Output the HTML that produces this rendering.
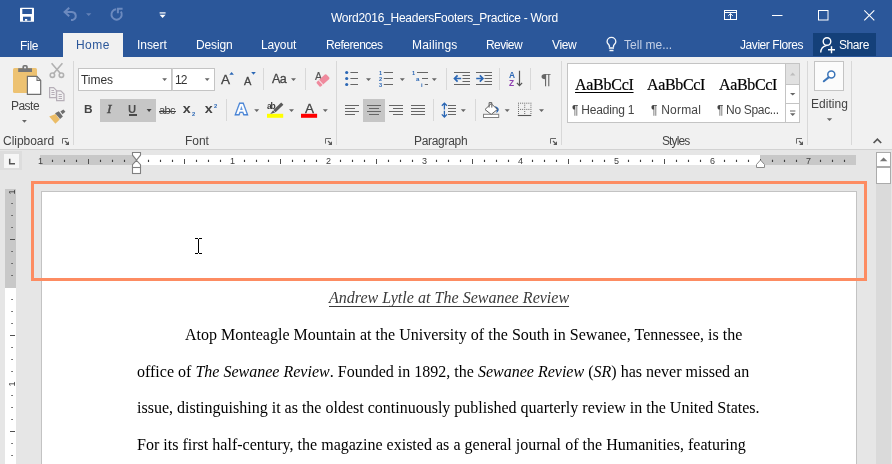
<!DOCTYPE html>
<html>
<head>
<meta charset="utf-8">
<title>Word2016_HeadersFooters_Practice - Word</title>
<style>
html,body{margin:0;padding:0;}
body{width:892px;height:464px;overflow:hidden;position:relative;background:#e6e6e6;font-family:"Liberation Sans",sans-serif;font-size:12px;color:#444;}
.abs{position:absolute;}
#titlebar{position:absolute;left:0;top:0;width:892px;height:57px;background:#2b579a;}
.t{position:absolute;white-space:nowrap;line-height:14px;font-size:12px;will-change:transform;}
.w{color:#fff;}
#hometab{position:absolute;left:63px;top:33px;width:60px;height:24px;background:#f1f1f1;}
#ribbon{position:absolute;left:0;top:57px;width:892px;height:92px;background:#f1f1f1;border-bottom:1px solid #d2d2d2;}
.vsep{position:absolute;width:1px;background:#d8d8d8;}
.box{position:absolute;background:#fff;border:1px solid #c4c4c4;box-sizing:border-box;}
.sel{position:absolute;background:#c6c6c6;}
svg{position:absolute;left:0;top:0;overflow:visible;}
#page{position:absolute;left:41px;top:191px;width:816px;height:280px;background:#fff;border:1px solid #c3c3c3;box-sizing:border-box;}
#orange{position:absolute;left:31px;top:181px;width:836px;height:100px;border:3px solid #fd8c62;box-sizing:border-box;}
.doc{will-change:transform;position:absolute;font-family:"Liberation Serif",serif;font-size:16px;line-height:18px;color:#000;white-space:nowrap;}
</style>
</head>
<body>
<div id="titlebar"></div>
<div id="hometab"></div>
<div class="abs" style="left:813px;top:33px;width:63px;height:23px;background:#144079"></div>
<div class="t" style="left:331.3px;top:11.24px;color:#fff;letter-spacing:-0.26px;">Word2016_HeadersFooters_Practice - Word</div>
<div class="t" style="left:20.0px;top:39.44px;color:#fff;letter-spacing:-0.3px;">File</div>
<div class="t" style="left:75.8px;top:38.44px;color:#2b579a;letter-spacing:0.43px;">Home</div>
<div class="t" style="left:137.1px;top:38.44px;color:#fff;letter-spacing:-0.06px;">Insert</div>
<div class="t" style="left:195.9px;top:38.44px;color:#fff;letter-spacing:-0.14px;">Design</div>
<div class="t" style="left:261.1px;top:38.44px;color:#fff;letter-spacing:-0.16px;">Layout</div>
<div class="t" style="left:326.0px;top:38.44px;color:#fff;letter-spacing:-0.48px;">References</div>
<div class="t" style="left:411.8px;top:38.44px;color:#fff;letter-spacing:0.19px;">Mailings</div>
<div class="t" style="left:486.1px;top:38.44px;color:#fff;letter-spacing:-0.56px;">Review</div>
<div class="t" style="left:552.3px;top:38.44px;color:#fff;letter-spacing:-0.37px;">View</div>
<div class="t" style="left:623.8px;top:38.44px;color:#c4d0e6;letter-spacing:0.02px;">Tell me...</div>
<div class="t" style="left:739.9px;top:38.44px;color:#fff;letter-spacing:-0.43px;">Javier Flores</div>
<div class="t" style="left:838.7px;top:38.44px;color:#fff;letter-spacing:-0.43px;">Share</div>
<svg width="892" height="57" viewBox="0 0 892 57">
<!-- save -->
<rect x="20" y="7.7" width="14" height="14.1" rx="0.6" fill="#fff"/>
<rect x="22.3" y="9" width="9.6" height="5" fill="#2b579a"/>
<rect x="23" y="16.7" width="7.8" height="4.1" fill="#2b579a"/>
<rect x="25" y="19" width="2.2" height="1.8" fill="#fff"/>
<!-- undo -->
<g fill="none" stroke="#6c8abf" stroke-width="2" stroke-linecap="butt">
<path d="M64.5 12 H72 A4 4 0 0 1 72.6 19.9 L71 20"/>
<path d="M69.2 7.7 L64.6 12 L69.2 16.3"/>
</g>
<path d="M86 13.2 h5.4 l-2.7 2.8z" fill="#6280b6"/>
<!-- redo -->
<g fill="none" stroke="#6c8abf" stroke-width="2">
<path d="M120.86 11.52 A5.2 5.2 0 1 1 116.15 9.32"/>
<path d="M117.9 13.2 V8.7 H122.6"/>
</g>
<!-- customize -->
<rect x="159.6" y="12.3" width="6" height="1.2" fill="#fff"/>
<path d="M159.6 14.8 h6 l-3 3.2z" fill="#fff"/>
<!-- ribbon display options -->
<g fill="none" stroke="#fff" stroke-width="1">
<rect x="724.5" y="10.5" width="12" height="9"/>
<path d="M724.5 12.5 H736.5"/>
<path d="M730.5 19.5 V13.6 M728.2 15.9 L730.5 13.6 L732.8 15.9"/>
</g>
<!-- window controls -->
<path d="M772 15.5 H782.5" stroke="#fff" stroke-width="1"/>
<rect x="818.5" y="10.5" width="9.5" height="9.5" fill="none" stroke="#fff" stroke-width="1"/>
<path d="M864.3 10.3 L874.3 20.3 M874.3 10.3 L864.3 20.3" stroke="#fff" stroke-width="1.1"/>
<!-- lightbulb -->
<g fill="none" stroke="#f4f7fb" stroke-width="1.35">
<path d="M609.4 47.2 V46.2 C609.4 44.6 607.1 43.9 607.1 41.8 A4.35 4.35 0 0 1 615.8 41.8 C615.8 43.9 613.5 44.6 613.5 46.2 V47.2"/>
<path d="M608.9 47.9 H614 M609.4 50.4 H613.5" stroke-width="1.5"/>
</g>
<!-- share person -->
<g fill="none" stroke="#fff" stroke-width="1.4">
<circle cx="827" cy="41.5" r="3.8"/>
<path d="M820.7 52.5 C821 48 823.5 46 826.5 45.6"/>
<path d="M831.5 46.3 V53.3 M828 49.8 H835"/>
</g>
</svg>
<div id="ribbon"></div>
<div class="vsep" style="left:73px;top:61px;height:84px;background:#d8d8d8"></div>
<div class="vsep" style="left:336px;top:61px;height:84px;background:#d8d8d8"></div>
<div class="vsep" style="left:561px;top:61px;height:84px;background:#d8d8d8"></div>
<div class="vsep" style="left:807px;top:61px;height:84px;background:#d8d8d8"></div>
<div class="vsep" style="left:851px;top:61px;height:84px;background:#d8d8d8"></div>
<div class="vsep" style="left:263px;top:68px;height:22px;background:#d8d8d8"></div>
<div class="vsep" style="left:305px;top:68px;height:22px;background:#d8d8d8"></div>
<div class="vsep" style="left:446px;top:68px;height:22px;background:#d8d8d8"></div>
<div class="vsep" style="left:499px;top:68px;height:22px;background:#d8d8d8"></div>
<div class="vsep" style="left:530px;top:68px;height:22px;background:#d8d8d8"></div>
<div class="vsep" style="left:226px;top:99px;height:22px;background:#d8d8d8"></div>
<div class="vsep" style="left:433px;top:99px;height:22px;background:#d8d8d8"></div>
<div class="vsep" style="left:475px;top:99px;height:22px;background:#d8d8d8"></div>
<div class="sel" style="left:100px;top:99px;width:56px;height:23px"></div>
<div class="sel" style="left:363px;top:99px;width:22px;height:23px"></div>
<div class="box" style="left:78px;top:68px;width:94px;height:23px"></div>
<div class="box" style="left:172px;top:68px;width:43px;height:23px;border-left-color:#d0d0d0"></div>
<div class="box" style="left:567px;top:63px;width:233px;height:60px"></div>
<div class="abs" style="left:785px;top:64px;width:1px;height:58px;background:#c4c4c4"></div>
<div class="abs" style="left:786px;top:64px;width:13px;height:20px;background:#e1e1e1"></div>
<div class="abs" style="left:786px;top:84px;width:13px;height:1px;background:#c4c4c4"></div>
<div class="abs" style="left:786px;top:103px;width:13px;height:1px;background:#c4c4c4"></div>
<div class="box" style="left:814px;top:61px;width:30px;height:30px;background:#fbfbfb"></div>
<div class="t" style="left:10.7px;top:98.64px;color:#444;letter-spacing:-0.53px;">Paste</div>
<div class="t" style="left:2.6px;top:133.54px;color:#444;letter-spacing:-0.03px;">Clipboard</div>
<div class="t" style="left:184.6px;top:133.54px;color:#444;letter-spacing:-0.03px;">Font</div>
<div class="t" style="left:413.6px;top:133.54px;color:#444;letter-spacing:-0.31px;">Paragraph</div>
<div class="t" style="left:662.3px;top:133.54px;color:#444;letter-spacing:-0.9px;">Styles</div>
<div class="t" style="left:810.7px;top:97.14px;color:#444;letter-spacing:0.03px;">Editing</div>
<div class="t" style="left:81.2px;top:72.74px;color:#333;letter-spacing:-0.05px;">Times</div>
<div class="t" style="left:175.1px;top:72.74px;color:#333;letter-spacing:-0.9px;">12</div>
<div class="t" style="left:572.4px;top:103.24px;color:#444;letter-spacing:-0.21px;">¶ Heading 1</div>
<div class="t" style="left:650.8px;top:103.24px;color:#444;letter-spacing:0.21px;">¶ Normal</div>
<div class="t" style="left:717.0px;top:103.24px;color:#444;letter-spacing:-0.33px;">¶ No Spac...</div>
<div class="t" style="left:574.7px;top:78.3px;color:#000;letter-spacing:-0.27px;font-size:16px;font-family:'Liberation Serif',serif;text-decoration:underline;text-underline-offset:2px;text-decoration-thickness:1.2px;-webkit-text-stroke:0.2px #000;">AaBbCcI</div>
<div class="t" style="left:646.7px;top:78.3px;color:#000;letter-spacing:-0.33px;font-size:16px;font-family:'Liberation Serif',serif;-webkit-text-stroke:0.2px #000;">AaBbCcI</div>
<div class="t" style="left:718.7px;top:78.3px;color:#000;letter-spacing:-0.33px;font-size:16px;font-family:'Liberation Serif',serif;-webkit-text-stroke:0.2px #000;">AaBbCcI</div>
<div class="t" style="left:84.2px;top:102.31px;color:#444;letter-spacing:0px;font-size:11.8px;font-weight:bold;">B</div>
<div class="t" style="left:107.3px;top:102.04px;color:#484848;letter-spacing:0px;font-size:13.5px;font-family:'Liberation Serif',serif;font-style:italic;-webkit-text-stroke:0.45px #484848;">I</div>
<div class="t" style="left:128.2px;top:102.48px;color:#4a4a4a;letter-spacing:0px;font-size:11.3px;font-weight:bold;">U</div>
<div class="abs" style="left:128.5px;top:114.4px;width:8px;height:1.2px;background:#4a4a4a"></div>
<div class="t" style="left:158.9px;top:102.89px;color:#444;letter-spacing:-0.6px;font-size:11px;">abc</div>
<div class="abs" style="left:158.5px;top:110.5px;width:17.5px;height:1px;background:#444"></div>
<div class="t" style="left:183.2px;top:102.02px;color:#444;letter-spacing:0px;font-size:13.5px;font-weight:bold;transform:scaleX(1.06);">x</div>
<div class="t" style="left:191.7px;top:107.09px;color:#2b67b5;letter-spacing:0px;font-size:5.8px;font-weight:bold;">2</div>
<div class="t" style="left:205.3px;top:102.02px;color:#444;letter-spacing:0px;font-size:13.5px;font-weight:bold;transform:scaleX(1.06);">x</div>
<div class="t" style="left:213.7px;top:99.29px;color:#2b67b5;letter-spacing:0px;font-size:5.8px;font-weight:bold;">2</div>
<div class="t" style="left:221.3px;top:73.02px;color:#444;letter-spacing:0px;font-size:13.5px;-webkit-text-stroke:0.3px #444;">A</div>
<div class="t" style="left:244.0px;top:73.89px;color:#444;letter-spacing:0px;font-size:11px;-webkit-text-stroke:0.3px #444;">A</div>
<div class="t" style="left:271.5px;top:71.57px;color:#444;letter-spacing:-0.5px;font-size:12.5px;-webkit-text-stroke:0.3px #444;">Aa</div>
<div class="t" style="left:315.0px;top:69.16px;color:#555;letter-spacing:0px;font-size:10.5px;-webkit-text-stroke:0.2px #555;">A</div>
<div class="t" style="left:266.9px;top:98.65px;color:#3b3b3b;letter-spacing:-1.3px;font-size:8.5px;font-weight:bold;">ab</div>
<div class="t" style="left:304.6px;top:101.72px;color:#444;letter-spacing:0px;font-size:13.5px;-webkit-text-stroke:0.3px #444;">A</div>
<div class="t" style="left:236.3px;top:102.4px;color:#fff;letter-spacing:0px;font-size:15px;font-weight:bold;-webkit-text-stroke:2.8px #3f7dd2;paint-order:stroke fill;text-shadow:0 0 2px #a9c8f0;">A</div>
<div class="t" style="left:540.5px;top:72.33px;color:#666;letter-spacing:0px;font-size:15.5px;transform:scaleX(1.28);transform-origin:1px 0;">¶</div>
<div class="t" style="left:508.8px;top:67.52px;color:#2b67b5;letter-spacing:0px;font-size:8.3px;font-weight:bold;">A</div>
<div class="t" style="left:509.1px;top:75.82px;color:#8e3fb0;letter-spacing:0px;font-size:8.3px;font-weight:bold;">Z</div>
<div class="t" style="left:378.9px;top:66.06px;color:#2b67b5;letter-spacing:0px;font-size:5.6px;font-weight:bold;">1</div>
<div class="t" style="left:378.7px;top:72.06px;color:#2b67b5;letter-spacing:0px;font-size:5.6px;font-weight:bold;">2</div>
<div class="t" style="left:378.7px;top:78.06px;color:#2b67b5;letter-spacing:0px;font-size:5.6px;font-weight:bold;">3</div>
<div class="t" style="left:412.1px;top:66.06px;color:#2b67b5;letter-spacing:0px;font-size:5.6px;font-weight:bold;">1</div>
<div class="t" style="left:415.7px;top:71.85px;color:#2b67b5;letter-spacing:0px;font-size:6.2px;font-weight:bold;">a</div>
<div class="t" style="left:420.8px;top:77.99px;color:#2b67b5;letter-spacing:0px;font-size:5.8px;font-weight:bold;">i</div>
<svg width="892" height="150" viewBox="0 0 892 150">
<path d="M22 120 H26.8 L24.4 122.7Z" fill="#666"/>
<path d="M162.2 78.3 H167 L164.6 80.9Z" fill="#666"/>
<path d="M204.8 78.3 H209.6 L207.2 80.9Z" fill="#666"/>
<path d="M291 78.3 H296 L293.5 80.9Z" fill="#666"/>
<path d="M254.2 109.3 H259.2 L256.7 111.9Z" fill="#666"/>
<path d="M289 109.3 H294 L291.5 111.9Z" fill="#666"/>
<path d="M322.8 109.3 H327.8 L325.3 111.9Z" fill="#666"/>
<path d="M366 78.3 H371 L368.5 80.9Z" fill="#666"/>
<path d="M399.8 78.3 H404.8 L402.3 80.9Z" fill="#666"/>
<path d="M431.8 78.3 H436.8 L434.3 80.9Z" fill="#666"/>
<path d="M460.8 109.3 H465.8 L463.3 111.9Z" fill="#666"/>
<path d="M504.7 109.3 H509.7 L507.2 111.9Z" fill="#666"/>
<path d="M539 109.3 H544 L541.5 111.9Z" fill="#666"/>
<path d="M790 92.9 H795.4 L792.7 95.6Z" fill="#666"/>
<path d="M826.8 118.2 H832.2 L829.5 120.9Z" fill="#666"/>
<path d="M790 75.4 H795.4 L792.7 72.6Z" fill="#bdbdbd"/>
<path d="M790 111 H795.4" stroke="#666" stroke-width="1"/>
<path d="M790 113.2 H795.4 L792.7 116Z" fill="#666"/>
<path d="M146.6 109.1 H151.6 L149.1 111.9Z" fill="#444"/>
<path d="M62.5 143.6 V138.5 H68" fill="none" stroke="#6a6a6a" stroke-width="1"/><path d="M69 141.2 V144.9 H65.2Z" fill="#5a5a5a"/><path d="M65 141 L68 144" stroke="#5a5a5a" stroke-width="1.1"/>
<path d="M325.5 143.6 V138.5 H331" fill="none" stroke="#6a6a6a" stroke-width="1"/><path d="M332 141.2 V144.9 H328.2Z" fill="#5a5a5a"/><path d="M328 141 L331 144" stroke="#5a5a5a" stroke-width="1.1"/>
<path d="M550.5 143.6 V138.5 H556" fill="none" stroke="#6a6a6a" stroke-width="1"/><path d="M557 141.2 V144.9 H553.2Z" fill="#5a5a5a"/><path d="M553 141 L556 144" stroke="#5a5a5a" stroke-width="1.1"/>
<path d="M796.5 143.6 V138.5 H802" fill="none" stroke="#6a6a6a" stroke-width="1"/><path d="M803 141.2 V144.9 H799.2Z" fill="#5a5a5a"/><path d="M799 141 L802 144" stroke="#5a5a5a" stroke-width="1.1"/>
<path d="M873.6 143 L877.4 139.2 L881.2 143" fill="none" stroke="#555" stroke-width="1.7"/>
<rect x="13" y="68" width="24" height="25" rx="1.5" fill="#edc272"/>
<path d="M18.2 72 V68.2 H22.4 V66.8 Q22.4 65 24.2 65 H26 Q27.8 65 27.8 66.8 V68.2 H32 V72Z" fill="#767676"/>
<rect x="24.1" y="66.6" width="2" height="1.7" fill="#f1f1f1"/>
<path d="M27.4 76.4 H37 L40.7 80.4 V94.4 H27.4Z" fill="#fff" stroke="#707070" stroke-width="1.2"/>
<path d="M37 76.4 V80.4 H40.7" fill="none" stroke="#707070" stroke-width="1.1"/>
<g fill="none" stroke="#b1b1b1" stroke-width="1.6">
<path d="M51.6 63.2 L60.4 73.6 M62.4 63.2 L53.6 73.6"/>
<circle cx="52.4" cy="75.2" r="2.2"/><circle cx="61.4" cy="75.2" r="2.2"/>
</g>
<g fill="#f1f1f1" stroke="#b6afb8" stroke-width="1.2">
<path d="M49.6 87.6 H53.6 L56.4 90.4 V97.6 H49.6Z"/>
<path d="M56.6 90.8 H60.8 L64 94 V100.6 H56.6Z"/>
</g>
<path d="M51.4 90.5 H54 M51.4 92.5 H54.6 M51.4 94.5 H54.6 M58.6 94.5 H61.8 M58.6 96.5 H62 M58.6 98.5 H62" stroke="#b6afb8" stroke-width="1"/>
<path d="M49.2 116.4 L55.6 114 L59.7 119.4 L55.4 123.7Z" fill="#ebbc66"/>
<path d="M55 113.3 L58.8 111.3 L62.9 116.6 L60.1 119Z" fill="#6e6e6e"/>
<path d="M60.4 111.6 L63.4 109.5 L65.4 111.8 L62.5 114.3Z" fill="#6e6e6e"/>
<path d="M229.3 74.8 H233.9 L231.6 72Z" fill="#2b67b5"/>
<path d="M251.2 72 H255.8 L253.5 74.8Z" fill="#2b67b5"/>
<g transform="rotate(-42 323 80.4)"><rect x="316.4" y="77.3" width="13.2" height="6.2" rx="1.3" fill="#ef8a9d"/><rect x="319.6" y="77" width="0.9" height="6.8" fill="#f6e4e8"/></g>
<rect x="267" y="113.8" width="16.2" height="4" fill="#ffff00"/>
<path d="M281.2 102.6 L283.4 104.8 L275.6 112.2 L273.4 110Z" fill="#5a5a5a"/>
<path d="M273 110.4 L275.2 112.6 L270.2 114Z" fill="#5a5a5a"/>
<rect x="301" y="113.8" width="16.1" height="4" fill="#ff0000"/>
<circle cx="346.7" cy="72.5" r="1.6" fill="#2b67b5"/><path d="M350.4 72.5 H358" stroke="#666" stroke-width="1"/>
<path d="M383.8 72.5 H393" stroke="#666" stroke-width="1"/>
<circle cx="346.7" cy="78.5" r="1.6" fill="#2b67b5"/><path d="M350.4 78.5 H358" stroke="#666" stroke-width="1"/>
<path d="M383.8 78.5 H393" stroke="#666" stroke-width="1"/>
<circle cx="346.7" cy="84.5" r="1.6" fill="#2b67b5"/><path d="M350.4 84.5 H358" stroke="#666" stroke-width="1"/>
<path d="M383.8 84.5 H393" stroke="#666" stroke-width="1"/>
<path d="M417 72.5 H428 M422 78.5 H428 M424.8 84.5 H428" stroke="#666" stroke-width="1"/>
<path d="M345 105.5 H359 M345 108.5 H355 M345 111.5 H359 M345 114.5 H355 " stroke="#666" stroke-width="1"/>
<path d="M367 105.5 H381 M369 108.5 H379 M367 111.5 H381 M369 114.5 H379 " stroke="#666" stroke-width="1"/>
<path d="M389 105.5 H403 M393 108.5 H403 M389 111.5 H403 M393 114.5 H403 " stroke="#666" stroke-width="1"/>
<path d="M411 105.5 H425 M411 108.5 H425 M411 111.5 H425 M411 114.5 H425 " stroke="#666" stroke-width="1"/>
<path d="M448 105.5 H456 M448 108.5 H456 M448 111.5 H456 M448 114.5 H456 " stroke="#666" stroke-width="1"/>
<path d="M444.4 103 V109.4 M444.4 110.8 V117.2 M441.8 105.8 L444.4 103.2 L447 105.8 M441.8 114.4 L444.4 117 L447 114.4" fill="none" stroke="#2b67b5" stroke-width="1.3"/>
<path d="M454 72.5 H470 M462.5 75.5 H470 M462.5 78.5 H470 M462.5 81.5 H470 M454 84.5 H470 " stroke="#666" stroke-width="1"/>
<path d="M455 78.5 H461.2 M457.6 75.4 L454.5 78.5 L457.6 81.6" fill="none" stroke="#2b67b5" stroke-width="1.7"/>
<path d="M476 72.5 H492 M484.5 75.5 H492 M484.5 78.5 H492 M484.5 81.5 H492 M476 84.5 H492 " stroke="#666" stroke-width="1"/>
<path d="M476.2 78.5 H482.4 M479.8 75.4 L482.9 78.5 L479.8 81.6" fill="none" stroke="#2b67b5" stroke-width="1.7"/>
<path d="M519.5 70.8 V85.3 M516.9 82.8 L519.5 85.6 L522.1 82.8" fill="none" stroke="#555" stroke-width="1.2"/>
<rect x="483.5" y="114.3" width="15.2" height="3.2" fill="#fff" stroke="#808080" stroke-width="1"/>
<path d="M495 106 Q499.6 107.6 498.6 110.6 Q497.8 112.2 496.4 113 L496.6 110.4Z" fill="#2b67b5"/>
<path d="M491.2 103.6 L497.4 109.5 L491.2 114.4 L485 109.5Z" fill="#fff" stroke="#5f5f5f" stroke-width="1"/>
<path d="M489.1 107.6 V102.6 H491.8 V107.6" fill="none" stroke="#5f5f5f" stroke-width="1"/>
<g fill="#6a6a6a"><rect x="518.0" y="102.7" width="1" height="1"/><rect x="520.07" y="102.7" width="1" height="1"/><rect x="522.14" y="102.7" width="1" height="1"/><rect x="524.21" y="102.7" width="1" height="1"/><rect x="526.28" y="102.7" width="1" height="1"/><rect x="528.35" y="102.7" width="1" height="1"/><rect x="530.42" y="102.7" width="1" height="1"/><rect x="518.0" y="108.9" width="1" height="1"/><rect x="520.07" y="108.9" width="1" height="1"/><rect x="522.14" y="108.9" width="1" height="1"/><rect x="524.21" y="108.9" width="1" height="1"/><rect x="526.28" y="108.9" width="1" height="1"/><rect x="528.35" y="108.9" width="1" height="1"/><rect x="530.42" y="108.9" width="1" height="1"/><rect x="518.0" y="104.7" width="1" height="1"/><rect x="524.21" y="104.7" width="1" height="1"/><rect x="530.42" y="104.7" width="1" height="1"/><rect x="518.0" y="106.8" width="1" height="1"/><rect x="524.21" y="106.8" width="1" height="1"/><rect x="530.42" y="106.8" width="1" height="1"/><rect x="518.0" y="111.0" width="1" height="1"/><rect x="524.21" y="111.0" width="1" height="1"/><rect x="530.42" y="111.0" width="1" height="1"/><rect x="518.0" y="113.0" width="1" height="1"/><rect x="524.21" y="113.0" width="1" height="1"/><rect x="530.42" y="113.0" width="1" height="1"/></g>
<path d="M517.8 115.5 H531.3" stroke="#555" stroke-width="1.1"/>
<circle cx="831.3" cy="74.6" r="3.5" fill="#fff" stroke="#3a74b8" stroke-width="1.5"/><path d="M828.6 77.4 L823.8 81.3" stroke="#3a74b8" stroke-width="2" stroke-linecap="round"/>
</svg>
<div class="abs" style="left:0;top:151px;width:22px;height:19px;background:#dddddd"></div>
<div class="abs" style="left:4px;top:153.5px;width:14.5px;height:14px;background:#f6f6f6"></div>
<div class="abs" style="left:40px;top:155px;width:97px;height:10px;background:#c8c8c8"></div>
<div class="abs" style="left:137px;top:155px;width:623px;height:10px;background:#fff"></div>
<div class="abs" style="left:760px;top:155px;width:96px;height:10px;background:#c8c8c8"></div>
<div class="abs" style="left:5px;top:189px;width:11px;height:99px;background:#c8c8c8"></div>
<div class="abs" style="left:5px;top:288px;width:11px;height:176px;background:#fff"></div>
<div class="abs" style="left:876px;top:151px;width:15px;height:313px;background:#dadada"></div>
<div class="abs" style="left:876px;top:151px;width:16px;height:33px;background:#e6e6e6"></div>
<div class="box" style="left:876px;top:152px;width:15px;height:15px;border-color:#ababab"></div>
<div class="box" style="left:876px;top:167px;width:15px;height:17px;border-color:#ababab"></div>
<div class="t" style="left:37.5px;top:153.58px;color:#404040;letter-spacing:0px;font-size:9px;">1</div>
<div class="t" style="left:229.5px;top:153.58px;color:#404040;letter-spacing:0px;font-size:9px;">1</div>
<div class="t" style="left:325.7px;top:153.58px;color:#404040;letter-spacing:0px;font-size:9px;">2</div>
<div class="t" style="left:421.8px;top:153.58px;color:#404040;letter-spacing:0px;font-size:9px;">3</div>
<div class="t" style="left:517.9px;top:153.58px;color:#404040;letter-spacing:0px;font-size:9px;">4</div>
<div class="t" style="left:613.8px;top:153.58px;color:#404040;letter-spacing:0px;font-size:9px;">5</div>
<div class="t" style="left:709.7px;top:153.58px;color:#404040;letter-spacing:0px;font-size:9px;">6</div>
<div class="t" style="left:805.7px;top:153.58px;color:#404040;letter-spacing:0px;font-size:9px;">7</div>
<svg width="892" height="464" viewBox="0 0 892 464">
<path d="M52.5 159.8 V162 M64.5 159.8 V162 M76.5 159.8 V162 M100.5 159.8 V162 M112.5 159.8 V162 M124.5 159.8 V162 M148.5 159.8 V162 M160.5 159.8 V162 M172.5 159.8 V162 M196.5 159.8 V162 M208.5 159.8 V162 M220.5 159.8 V162 M244.5 159.8 V162 M256.5 159.8 V162 M268.5 159.8 V162 M292.5 159.8 V162 M304.5 159.8 V162 M316.5 159.8 V162 M340.5 159.8 V162 M352.5 159.8 V162 M364.5 159.8 V162 M388.5 159.8 V162 M400.5 159.8 V162 M412.5 159.8 V162 M436.5 159.8 V162 M448.5 159.8 V162 M460.5 159.8 V162 M484.5 159.8 V162 M496.5 159.8 V162 M508.5 159.8 V162 M532.5 159.8 V162 M544.5 159.8 V162 M556.5 159.8 V162 M580.5 159.8 V162 M592.5 159.8 V162 M604.5 159.8 V162 M628.5 159.8 V162 M640.5 159.8 V162 M652.5 159.8 V162 M676.5 159.8 V162 M688.5 159.8 V162 M700.5 159.8 V162 M724.5 159.8 V162 M736.5 159.8 V162 M748.5 159.8 V162 M772.5 159.8 V162 M784.5 159.8 V162 M796.5 159.8 V162 M820.5 159.8 V162 M832.5 159.8 V162 M844.5 159.8 V162 " stroke="#404040" stroke-width="1.15"/>
<path d="M88.5 159 V164 M184.5 159 V164 M280.5 159 V164 M376.5 159 V164 M472.5 159 V164 M568.5 159 V164 M664.5 159 V164 M760.5 159 V164 " stroke="#505050" stroke-width="1"/>
<path d="M11.3 203.5 H12.8 M11.3 215.5 H12.8 M11.3 227.5 H12.8 M11.3 251.5 H12.8 M11.3 263.5 H12.8 M11.3 275.5 H12.8 M11.3 299.5 H12.8 M11.3 311.5 H12.8 M11.3 323.5 H12.8 M11.3 347.5 H12.8 M11.3 359.5 H12.8 M11.3 371.5 H12.8 M11.3 395.5 H12.8 M11.3 407.5 H12.8 M11.3 419.5 H12.8 M11.3 443.5 H12.8 M11.3 455.5 H12.8 " stroke="#505050" stroke-width="1"/>
<path d="M10 239.5 H15 M10 335.5 H15 M10 431.5 H15 " stroke="#505050" stroke-width="1"/>
<path d="M9.7 158.8 V163.7 H15" fill="none" stroke="#555" stroke-width="1.5"/>
<path d="M132.5 152.5 H140.5 V155.2 L136.5 160.2 L132.5 155.2Z" fill="#fff" stroke="#808080" stroke-width="1.1"/>
<path d="M136.5 160.4 L140.5 164.6 V167.5 H132.5 V164.6Z" fill="#fff" stroke="#808080" stroke-width="1.1"/>
<rect x="132.5" y="167.5" width="8" height="6" fill="#fff" stroke="#808080" stroke-width="1.1"/>
<path d="M760.5 160 L764.5 164.5 V167.5 H756.5 V164.5Z" fill="#fff" stroke="#8a8a8a" stroke-width="1"/>
<path d="M879.8 161.2 H887.4 L883.6 157.4Z" fill="#777"/>
</svg>
<div class="t" style="left:7px;top:184.5px;width:10px;height:14px;font-size:9px;color:#383838;text-align:center;transform:rotate(-90deg);transform-origin:5px 7px;">1</div>
<div class="t" style="left:7px;top:376.5px;width:10px;height:14px;font-size:9px;color:#383838;text-align:center;transform:rotate(-90deg);transform-origin:5px 7px;">1</div>
<div id="page"></div>
<div id="orange"></div>
<div class="doc" style="left:329.2px;top:289px;font-style:italic;text-decoration:underline;text-underline-offset:2.5px;color:#3a3a3a;word-spacing:0.15px">Andrew Lytle at The Sewanee Review</div>
<div class="doc" style="left:185px;top:326px;word-spacing:0.09px">Atop Monteagle Mountain at the University of the South in Sewanee, Tennessee, is the</div>
<div class="doc" style="left:137px;top:363px;word-spacing:0.04px">office of <i>The Sewanee Review</i>. Founded in 1892, the <i>Sewanee Review</i> (<i>SR</i>) has never missed an</div>
<div class="doc" style="left:137px;top:399px">issue, distinguishing it as the oldest continuously published quarterly review in the United States.</div>
<div class="doc" style="left:137px;top:436px;word-spacing:0.08px">For its first half-century, the magazine existed as a general journal of the Humanities, featuring</div>
<svg width="892" height="464" viewBox="0 0 892 464"><path d="M195 238.5 H198 M199 238.5 H202 M198.5 239 V253 M195 253.5 H198 M199 253.5 H202" stroke="#000" stroke-width="1" fill="none"/></svg>
</body>
</html>
